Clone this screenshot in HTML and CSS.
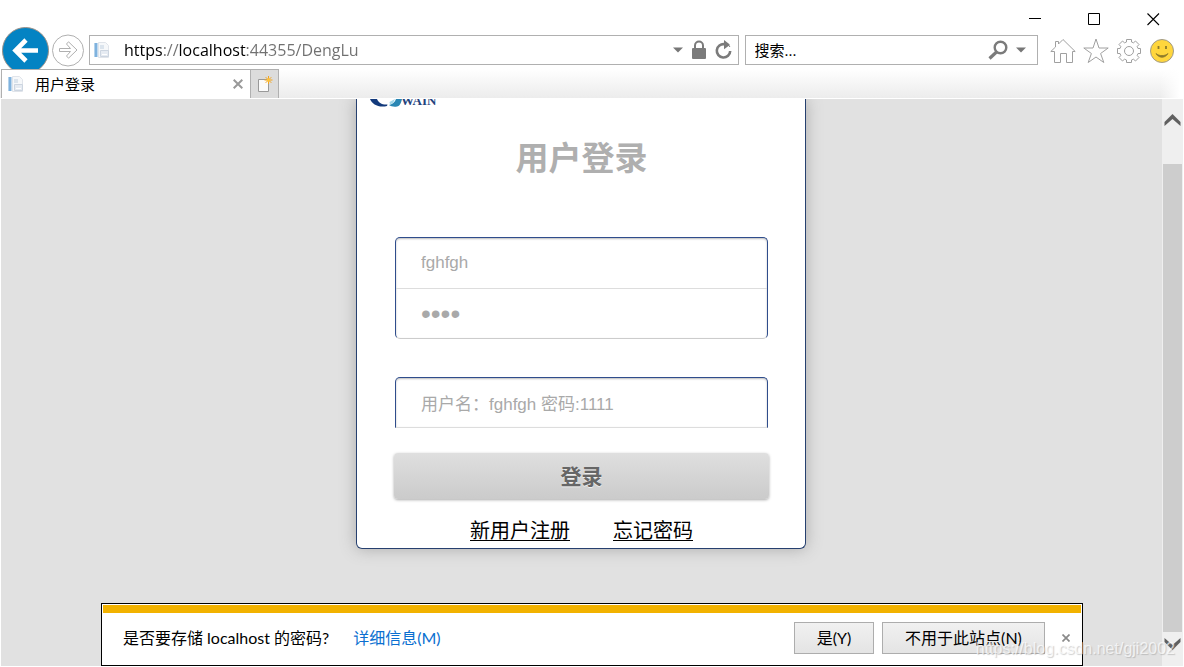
FILE: index.html
```
<!DOCTYPE html>
<html lang="zh-CN">
<head>
<meta charset="utf-8">
<title>用户登录</title>
<link rel="stylesheet" href="styles.css">
</head>
<body>
<header class="chrome">
  <div class="titlebar">
    <button class="win" aria-label="最小化"><svg width="13" height="13" viewBox="0 0 13 13"><path d="M0 5.500h12" stroke="#000"/></svg></button>
    <button class="win" aria-label="最大化"><svg width="13" height="13" viewBox="0 0 13 13"><path d="M.5.5h11v11H.5z" fill="none" stroke="#000"/></svg></button>
    <button class="win" aria-label="关闭"><svg width="13" height="13" viewBox="0 0 13 13"><path d="M.5.5l11.500 11.500M12 .5L.5 12" stroke="#000" stroke-width="1.100"/></svg></button>
  </div>
  <div class="toolbar">
    <button class="back" aria-label="后退"><svg width="48" height="48" viewBox="0 0 48 48"><circle cx="24.500" cy="23.500" r="23" fill="#0483c3" stroke="#9a9088" stroke-width="1"/><path d="M37 23.500H15M25 13L14.500 23.500L25 34" fill="none" stroke="#fff" stroke-width="4.600"/></svg></button>
    <button class="forward" aria-label="前进"><svg width="34" height="34" viewBox="0 0 34 34"><circle cx="17" cy="17.500" r="15.500" fill="#fff" stroke="#b0b0b0"/><path d="M8.500 15.500h11l-4-4.500 2-2.200 8.500 8.200-8.500 8.200-2-2.200 4-4.500h-11z" fill="#fff" stroke="#b0b0b0"/></svg></button>
    <div class="box address">
      <svg class="page" width="17" height="17" viewBox="0 0 17 17"><path d="M1 1h3.500v14H1z" fill="#7fb2de"/><path d="M1 1h1v14H1z" fill="#b4d3ec"/><path d="M5.500.5h7l3 3v12h-10z" fill="#f6f8fa" stroke="#e0e4ea"/><path d="M7 4h4M7 6h4" stroke="#c0d0e0"/><path d="M7.500 8.500h8v6h-8z" fill="#e6ebf2" stroke="#ccd5e0"/><path d="M9 12.500h5" stroke="#fff"/></svg>
      <input class="url" type="text" aria-label="地址" value="https://localhost:44355/DengLu">
      <button class="icon" aria-label="显示地址"><svg width="10" height="6" viewBox="0 0 10 6"><path d="M0 .5h10l-5 5z" fill="#777"/></svg></button>
      <button class="icon" aria-label="安全报告"><svg width="14" height="20" viewBox="0 0 14 20"><path d="M3 9V5.500a4 4 0 0 1 8 0V9" fill="none" stroke="#7b7b7b" stroke-width="2"/><rect y="8" width="14" height="11" rx="1" fill="#7b7b7b"/></svg></button>
      <button class="icon" aria-label="刷新"><svg width="17" height="20" viewBox="0 0 17 20"><path d="M9.500 4.200A6.700 6.700 0 1 0 15.200 11" fill="none" stroke="#7b7b7b" stroke-width="2.600"/><path d="M9 0l5.500 4.200v1L9 9.300z" fill="#7b7b7b"/><path d="M13.500 5l1.500 2" stroke="#7b7b7b"/></svg></button>
    </div>
    <div class="box search">
      <input class="query" type="text" aria-label="搜索" placeholder="搜索...">
      <button class="icon" aria-label="搜索"><svg width="20" height="20" viewBox="0 0 20 20"><circle cx="12.500" cy="7.500" r="5.800" fill="none" stroke="#7b7b7b" stroke-width="2.400"/><path d="M8.500 12L1.500 18.500" stroke="#7b7b7b" stroke-width="3.200"/></svg></button>
      <button class="icon" aria-label="搜索选项"><svg width="10" height="6" viewBox="0 0 10 6"><path d="M0 .5h10l-5 5z" fill="#777"/></svg></button>
    </div>
    <div class="tools">
      <button class="icon" aria-label="主页"><svg width="26" height="26" viewBox="0 0 26 26"><path d="M.8 13.500L5.500 9V3.500h3V6L13 1.500l12.200 12h-2.700v11h-6v-9h-6v9h-6v-11z" fill="none" stroke="#a0a0a0"/></svg></button>
      <button class="icon" aria-label="收藏夹"><svg width="26" height="26" viewBox="0 0 26 26"><path d="M13 1l3 9h9.200l-7.600 5.500 3.200 9L13 19l-7.800 5.500 3.200-9L.8 10H10z" fill="none" stroke="#a0a0a0"/></svg></button>
      <button class="icon" aria-label="工具"><svg width="26" height="26" viewBox="0 0 26 26"><path d="M10.500 4V1.500h5V4l2 .8 2-1.800 3.500 3.500-1.800 2 .8 2h2.500v5H22l-.8 2 1.800 2-3.500 3.500-2-1.800-2 .8v2.500h-5V22l-2-.8-2 1.800L3 19.500l1.800-2-.8-2H1.500v-5H4l.8-2L3 6.500 6.500 3l2 1.800z" fill="none" stroke="#a0a0a0" stroke-linejoin="round"/><circle cx="13" cy="13" r="4.500" fill="none" stroke="#a0a0a0"/></svg></button>
      <button class="icon" aria-label="反馈"><svg width="26" height="26" viewBox="0 0 26 26"><circle cx="13" cy="13" r="11.500" fill="#ffd63d" stroke="#a09a88"/><path d="M9.500 8v3M17 8v3" stroke="#8d7a2b" stroke-width="1.800"/><path d="M7 15.500c3 5 9 5 12 0-3 2.800-9 2.800-12 0z" fill="#8d7a2b" stroke="#8d7a2b" stroke-width=".8"/></svg></button>
    </div>
  </div>
  <div class="tabs">
    <div class="tab">
      <svg class="page" width="17" height="17" viewBox="0 0 17 17"><path d="M1 1h3.500v14H1z" fill="#7fb2de"/><path d="M1 1h1v14H1z" fill="#b4d3ec"/><path d="M5.500.5h7l3 3v12h-10z" fill="#f6f8fa" stroke="#e0e4ea"/><path d="M7 4h4M7 6h4" stroke="#c0d0e0"/><path d="M7.500 8.500h8v6h-8z" fill="#e6ebf2" stroke="#ccd5e0"/><path d="M9 12.500h5" stroke="#fff"/></svg>
      <span class="tab-title">用户登录</span>
      <button class="icon" aria-label="关闭选项卡"><svg width="10" height="10" viewBox="0 0 10 10"><path d="M.7.7l8.600 8.600M9.300.7L.7 9.300" stroke="#999" stroke-width="2"/></svg></button>
    </div>
    <button class="new-tab" aria-label="新建选项卡"><svg width="16" height="17" viewBox="0 0 16 17"><path d="M1.500 3.500h10v12h-10z" fill="#fbfbfb" stroke="#999"/><path d="M11.500 0v8M7.500 4h8M8.700 1.200l5.600 5.600M14.300 1.200L8.700 6.800" stroke="#f2a41f" stroke-width="1"/><circle cx="11.500" cy="4" r="1.800" fill="#ffc33b"/></svg></button>
  </div>
</header>

<div class="viewport">
  <main class="page-area">
    <form class="card">
      <svg class="logo" width="70" height="9" viewBox="0 0 70 9" role="img" aria-label="Cowain">
        <path d="M0 0h7c1.500 3.500 5 6 10.500 5.500L17 7C9 9 2 5.500 0 0z" fill="#133a7c"/>
        <path d="M19 6c3-.5 6-3 7-6h6c-1 4-2 7-5 7.500-3 .5-6 0-8-1.500z" fill="#2a87b4"/>
        <path d="M19.500 3l5.500-3-2 4-3 1.500z" fill="#9fd7ea"/>
        <text class="logo-text" x="31" y="6">WAIN</text>
      </svg>
      <h1 class="heading">用户登录</h1>
      <div class="fields">
        <input class="field" type="text" aria-label="用户名" value="fghfgh">
        <input class="field secret" type="password" aria-label="密码" value="1111">
      </div>
      <div class="fields hint">
        <input class="field" type="text" aria-label="提示" value="用户名：fghfgh 密码:1111">
      </div>
      <button class="submit" type="button">登录</button>
      <nav class="links"><a href="#">新用户注册</a><a href="#">忘记密码</a></nav>
    </form>
  </main>
  <div class="scrollbar">
    <svg width="17" height="13" viewBox="0 0 17 13"><path d="M.5 12V8L8.500 0l8 8v4l-8-7z" fill="#606060"/></svg>
    <div class="thumb"></div>
    <svg width="17" height="13" viewBox="0 0 17 13"><path d="M.5 1v4l8 8 8-8V1l-8 7z" fill="#606060"/></svg>
  </div>
  <section class="notice">
    <div class="notice-stripe"></div>
    <div class="notice-row">
      <span>是否要存储 localhost 的密码?</span>
      <a class="more" href="#">详细信息(M)</a>
      <button class="choice">是(Y)</button>
      <button class="choice wide">不用于此站点(N)</button>
      <button class="icon" aria-label="关闭"><svg width="8" height="8" viewBox="0 0 8 8"><path d="M.5.5l7 7M7.500.5l-7 7" stroke="#8a8a8a" stroke-width="1.700"/></svg></button>
    </div>
  </section>
  <div class="watermark">https://blog.csdn.net/gji2002</div>
</div>
</body>
</html>
```

FILE: styles.css
```
* { box-sizing: border-box; }
body {
  margin: 0;
  height: 100vh;
  display: flex;
  flex-direction: column;
  background: #fff;
  color: #000;
  font: 15px/20px "Open Sans", "Noto Sans CJK SC", sans-serif;
  overflow: hidden;
}
button { margin: 0; padding: 0; border: 0; background: none; font: inherit; color: inherit; }
input { min-width: 0; margin: 0; padding: 0; border: 0; outline: 0; background: none; font: inherit; color: inherit; }
svg { display: block; flex: none; }

.titlebar { display: flex; justify-content: flex-end; gap: 46px; height: 27px; padding: 13px 24px 0 0; }
.win { height: 13px; }
.toolbar { display: flex; height: 42px; padding: 0 9px 0 1px; overflow: hidden; }
.back { height: 48px; }
.forward { height: 34px; margin: 6px 4px 0 2px; }
.box { display: flex; align-items: center; height: 30px; margin-top: 8px; border: 1px solid #b0b0b0; background: #fff; }
.address { flex: 1; padding: 0 6px 0 3px; gap: 9px; }
.url {
  flex: 1;
  height: 26px;
  margin-left: 5px;
  font-size: 16px;
  color: transparent;
  background: linear-gradient(90deg, #000 39px, #707070 39px 55px, #000 55px 122px, #707070 122px) text;
}
.search { flex: 0 0 25%; margin-left: 6px; padding: 0 11px 0 9px; gap: 8px; }
.query { flex: 1; }
.query::placeholder { color: #000; opacity: 1; }
.tools { display: flex; gap: 7px; margin: 11px 0 0 12px; height: 26px; }

.tabs {
  display: flex;
  height: 29px;
  padding-left: 1px;
  background: linear-gradient(270deg, #fff 4px, transparent 24px), linear-gradient(#fff, #ececec);
}
.tab { display: flex; align-items: center; gap: 11px; width: 250px; padding: 0 7px 0 5px; border: 1px solid #b0b0b0; border-width: 1px 1px 0; background: #fff; }
.tab-title { flex: 1; }
.new-tab { width: 28px; padding-left: 6px; border: 1px solid #b0b0b0; border-width: 1px 1px 0 0; background: #dcdcdc; }

.viewport { position: relative; flex: 1; min-height: 0; display: flex; padding: 1px; }
.page-area { flex: 1; min-width: 0; padding-right: 1px; background: #e1e1e1; overflow: hidden; }
.card {
  width: 450px;
  margin: 0 auto;
  padding: 0 36px 4px 37px;
  border: 1px solid #26406f;
  border-top: 0;
  border-radius: 0 0 6px 6px;
  background: #fff;
  box-shadow: 0 0 16px #aaa;
}
.logo { margin-left: -24px; }
.logo-text { font: bold 13px "Liberation Serif", serif; fill: #24437d; }
.heading { margin: 28px 0 0; font: bold 33px/40px "Noto Sans CJK SC", sans-serif; color: #afafaf; text-align: center; }
.fields {
  display: flex;
  flex-direction: column;
  margin: 61px 1px 0;
  border: 1px solid #2f4d8c;
  border-bottom-color: #ccc;
  border-radius: 5px;
  box-shadow: inset 0 1px 2px #bbb;
  font: 17px/20px "Liberation Sans", "Noto Sans CJK SC", sans-serif;
  color: #a9a9a9;
}
.field { height: 50px; padding: 0 25px; }
.field + .field { border-top: 1px solid #ddd; }
.secret { font-size: 28px; }
.hint { margin-top: 38px; border-radius: 5px 5px 0 0; border-bottom-color: #ddd; }
.hint .field { height: 49px; }
.submit {
  display: block;
  width: 100%;
  height: 46px;
  margin-top: 25px;
  padding-bottom: 2px;
  border-radius: 4px;
  background: linear-gradient(#dfdfdf, #cbcbcb);
  box-shadow: 0 1px 3px #aaa;
  font: bold 21px/30px "Noto Sans CJK SC", sans-serif;
  color: #666;
  text-shadow: 0 1px 0 #eee;
}
.links { display: flex; justify-content: center; gap: 43px; margin-top: 17px; font: 20px/28px "Noto Sans CJK SC", sans-serif; }
.links a { color: #000; text-underline-offset: 2px; text-decoration-thickness: 1px; }

.scrollbar { display: flex; flex-direction: column; align-items: center; width: 21px; padding: 15px 0 16px; background: #efefef; }
.thumb { flex: 1; align-self: stretch; margin: 37px 1px 5px; background: #cdcdcd; }

.notice { position: absolute; left: 101px; right: 101px; bottom: 1px; padding: 1px; border: 1px solid #000; background: #fff; font: 16px/20px Lato, "Noto Sans CJK SC", sans-serif; }
.notice-stripe { height: 8px; background: #f2b200; }
.notice-row { display: flex; align-items: center; height: 51px; padding: 0 11px 2px 20px; }
.more { flex: 1; margin-left: 24px; color: #0a6fd0; text-decoration: none; }
.choice { width: 80px; height: 32px; margin-right: 8px; border: 1px solid #adadad; background: linear-gradient(#f1f1f1, #e4e4e4); }
.wide { width: 163px; margin-right: 17px; }
.watermark { position: absolute; right: 9px; bottom: 8px; font: 16px/20px "Liberation Sans", sans-serif; color: #ffffffb3; text-shadow: 1px 1px 1px #8886; pointer-events: none; }
```
